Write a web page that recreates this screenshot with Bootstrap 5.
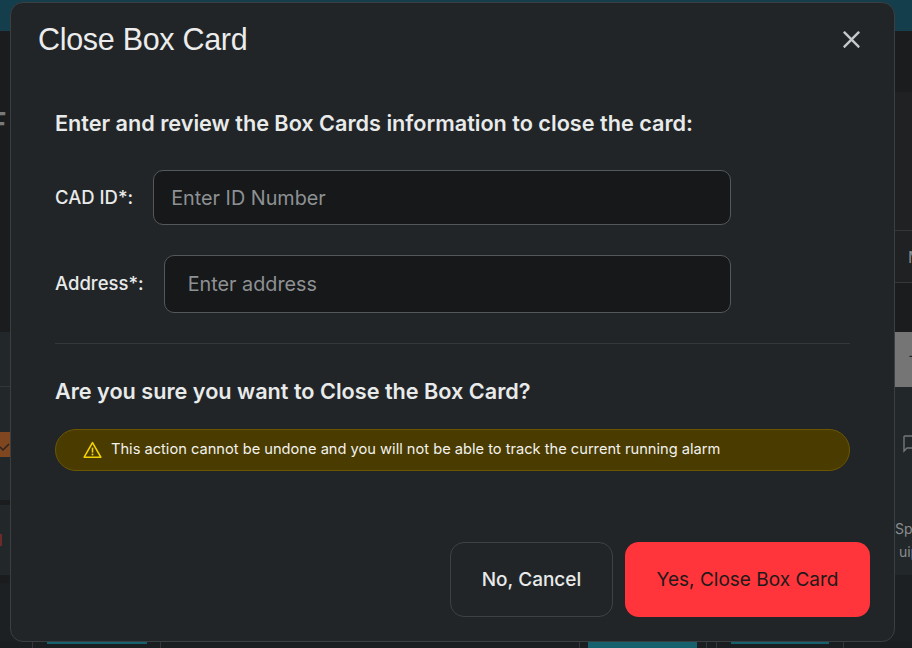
<!DOCTYPE html>
<html lang="en">
<head>
<meta charset="utf-8">
<title>Close Box Card</title>
<link href="https://cdn.jsdelivr.net/npm/bootstrap@5.3.0/dist/css/bootstrap.min.css" rel="stylesheet">
<style>
html,body{height:648px;overflow:hidden}
body{background:#1c2023;font-family:"Inter","Liberation Sans",sans-serif;color:#e9eaea;position:relative}
.page-under{height:648px;overflow:hidden}
.top-strip{height:31px;background:#143e4c;border-bottom:1px solid #173f4d}
.side-cols{height:611px}
.side-l{width:10px;overflow:hidden}
.side-r{width:17px;overflow:hidden}
.blk{overflow:hidden;white-space:nowrap;font-size:14px;color:#8a8d8f}
.b-dark{background:#1a1c1e}
.b-mid{background:#1f2123}
.b-light{background:#22272a}
.b-gray{background:#757575;color:#222}
.b-line{border-bottom:1px solid #33373a}
.orange-box{width:10px;height:25px;background:#7f4720;margin-top:45px}
.big-f{font-size:30px;font-weight:600;color:#77797b;line-height:30px;margin:77px 0 0 -11px}
.red-tick{width:2px;height:12px;background:#6e2a2a;margin-top:29px}
.m-mark{font-size:16px;padding:14px 0 0 13px}
.minus-mark{padding:12px 0 0 13px}
.chat-wrap{padding:48px 0 0 8px}
.spec-wrap{line-height:23px;padding-top:17px}
.bottom-strip{height:6px;background-color:#1a1e20;background-repeat:no-repeat;
background-image:
 linear-gradient(#33373a,#33373a),linear-gradient(#33373a,#33373a),linear-gradient(#33373a,#33373a),
 linear-gradient(#33373a,#33373a),linear-gradient(#33373a,#33373a),linear-gradient(#33373a,#33373a),
 linear-gradient(#17606e,#17606e),linear-gradient(#17606e,#17606e),linear-gradient(#17606e,#17606e);
background-size:1px 6px,1px 6px,1px 6px,1px 6px,1px 6px,1px 6px,109px 6px,100px 2px,98px 2px;
background-position:32px 0,160px 0,579px 0,706px 0,716px 0,843px 0,588px 0,47px 0,731px 0}
.cover{position:absolute;left:10px;top:2px;width:885px;height:640px}
.cover.modal-content{background:#212527;border:1px solid #3a3f42;border-radius:13px;color:#e9eaea}
.cover .modal-header{border:0;padding:18px 33px 0 27px;align-items:flex-start}
.cover .modal-title{font-family:"Liberation Sans",sans-serif;font-size:30.5px;letter-spacing:-.3px;line-height:36px;font-weight:400;color:#ececec}
.cover .btn-close{font-size:19px;padding:0;margin:9px 0 0;opacity:.75}
.cover .modal-body{padding:51px 44px 0 44px;flex:none}
.lead-line{font-size:21.65px;font-weight:600;line-height:30px;margin:0;color:#e9eaea}
.form-lines{width:676px}
.field-label{font-size:18.5px;font-weight:500;margin:0;white-space:nowrap;color:#e9eaea}
.field-input.form-control{background:#16181a;border:1px solid #55585a;border-radius:10px;font-size:19.8px;color:#e9eaea;box-shadow:none}
.field-input.form-control::placeholder{color:#8e9193;opacity:1}
.fi-a.form-control{height:55px;padding:0 17px}
.fi-b.form-control{height:58px;padding:0 23px}
.row-a{margin-top:32px;gap:20px}
.row-b{margin-top:30px;gap:20px}
.split{border:0;border-top:1px solid #33383b;opacity:1;margin:30px 0 32px}
.warn-pill{height:42px;margin-top:23px;background:#4a3b00;border:1px solid #6b5600;border-radius:21px;padding:0 0 0 27px;gap:9px;font-size:14.65px;color:#f2f2ee;width:795px}
.cover .modal-footer{border:0;padding:0 24px 24px 0;margin-top:auto;gap:12px;flex-wrap:nowrap}
.cover .modal-footer>*{margin:0}
.act{height:75px;border-radius:14px;font-size:19px;font-weight:500;padding-top:8px}
.act-no.btn{width:163px;background:transparent;border:1px solid #3e4245;color:#e9eaea}
.act-yes.btn{width:245px;background:#ff353b;border:0;color:#1d1a1a;font-weight:400}
</style>
</head>
<body>
<div class="page-under">
  <div class="top-strip"></div>
  <div class="d-flex justify-content-between side-cols">
    <div class="side-l">
      <div class="blk b-dark" style="height:301px"><div class="big-f">F</div></div>
      <div class="blk b-light b-line" style="height:55px"></div>
      <div class="blk b-light" style="height:113px">
        <div class="orange-box d-flex align-items-center">
          <svg width="10" height="25" viewBox="0 0 10 25"><path d="M0 15l3 3 6-6" fill="none" stroke="#2a2320" stroke-width="1.5"/></svg>
        </div>
      </div>
      <div class="blk b-dark" style="height:5px"></div>
      <div class="blk b-light" style="height:70px"><div class="red-tick"></div></div>
      <div class="blk b-dark" style="height:8px"></div>
      <div class="blk" style="height:59px"></div>
    </div>
    <div class="side-r">
      <div class="blk b-dark" style="height:61px"></div>
      <div class="blk b-mid b-line" style="height:139px"></div>
      <div class="blk b-mid b-line m-mark" style="height:52px">M</div>
      <div class="blk b-dark" style="height:49px"></div>
      <div class="blk b-gray minus-mark" style="height:55px">&minus;</div>
      <div class="blk b-light chat-wrap" style="height:113px">
        <svg width="12" height="18" viewBox="0 0 12 18" class="d-block"><path d="M12 1H2a1 1 0 0 0-1 1v14l3-3h8" fill="none" stroke="#777" stroke-width="1.4"/></svg>
      </div>
      <div class="blk b-light spec-wrap" style="height:75px">Spec<br>&nbsp;uip</div>
      <div class="blk" style="height:67px"></div>
    </div>
  </div>
  <div class="bottom-strip"></div>
</div>

<div class="modal-content cover">
  <div class="modal-header">
    <h5 class="modal-title">Close Box Card</h5>
    <button type="button" class="btn-close btn-close-white" aria-label="Close"></button>
  </div>
  <div class="modal-body">
    <p class="lead-line">Enter and review the Box Cards information to close the card:</p>
    <div class="form-lines">
      <div class="d-flex align-items-center row-a">
        <label class="field-label" for="cad">CAD ID*:</label>
        <input id="cad" class="form-control field-input fi-a" placeholder="Enter ID Number">
      </div>
      <div class="d-flex align-items-center row-b">
        <label class="field-label" for="addr">Address*:</label>
        <input id="addr" class="form-control field-input fi-b" placeholder="Enter address">
      </div>
    </div>
    <hr class="split">
    <p class="lead-line">Are you sure you want to Close the Box Card?</p>
    <div class="d-flex align-items-center warn-pill">
      <svg width="19" height="18" viewBox="0 0 19 18" class="flex-shrink-0"><path d="M9.5 1.6 1.2 16.2h16.6z" fill="none" stroke="#f2d200" stroke-width="1.6" stroke-linejoin="round"/><path d="M9.5 6.6v5" stroke="#f2d200" stroke-width="1.6"/><circle cx="9.5" cy="13.6" r="1" fill="#f2d200"/></svg>
      <span>This action cannot be undone and you will not be able to track the current running alarm</span>
    </div>
  </div>
  <div class="modal-footer">
    <button type="button" class="btn act act-no">No, Cancel</button>
    <button type="button" class="btn act act-yes">Yes, Close Box Card</button>
  </div>
</div>
<script src="https://cdn.jsdelivr.net/npm/bootstrap@5.3.0/dist/js/bootstrap.bundle.min.js"></script>
</body>
</html>
